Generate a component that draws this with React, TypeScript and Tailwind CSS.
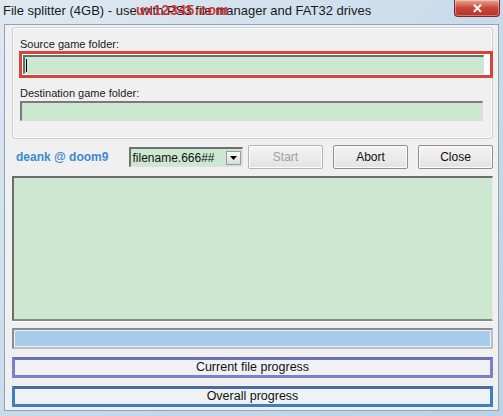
import React from "react";

const ui = { fontFamily: '"Liberation Sans", Arial, sans-serif' };

function SysButton({ label, disabled }: { label: string; disabled?: boolean }) {
  return (
    <div
      className={`flex h-[24px] w-[75px] items-center justify-center rounded-[2px] border border-[#8f8f8f] bg-gradient-to-b from-[#f4f4f4] to-[#e2e2e2] text-[12px] shadow-[inset_0_0_0_1px_#fcfcfc] ${
        disabled ? "border-[#b5b5b5] text-[#a0a0a0]" : "text-[#111]"
      }`}
    >
      {label}
    </div>
  );
}

export default function App() {
  return (
    <div
      className="flex h-[416px] w-[503px] flex-col overflow-hidden bg-gradient-to-br from-[#dfe9f2] via-[#c9dbeb] to-[#bcd2e6]"
      style={ui}
    >
      {/* caption bar */}
      <div className="relative flex h-[24px] shrink-0 items-start justify-between">
        <div className="relative pl-[3px] pt-[3px] text-[13px] leading-[16px] text-[#1a1a1a]">
          File splitter (4GB) - use with PS3 file manager and FAT32 drives
          <span className="absolute left-[136px] top-[2px] text-[14px] font-bold tracking-[0.5px] text-[#d81e1e]/90">
            ux12345.com
          </span>
        </div>
        <div className="mr-[3px] flex h-[17px] w-[46px] items-center justify-center rounded-b-[4px] border border-t-0 border-[#7a2a24] bg-gradient-to-b from-[#e8a393] via-[#c9463a] to-[#b83226] text-[13px] font-bold leading-none text-white shadow-[inset_0_0_0_1px_rgba(255,255,255,0.35)]">
          ✕
        </div>
      </div>

      {/* client area */}
      <div className="mx-[4px] flex flex-1 flex-col border border-[#8ea4bb] bg-[#f0f0f0] pl-[7px] pr-[5px]">
        {/* folder group */}
        <div className="mt-[2px] flex h-[112px] w-[481px] flex-col rounded-[3px] border border-[#c7ced4] px-[7px] pt-[9px] shadow-[inset_0_0_0_1px_#fbfbfb]">
          <div className="text-[11px] leading-[14px] text-[#1a1a1a]">Source game folder:</div>
          <div className="-ml-[1px] flex h-[27px] w-[474px] items-center border-[3px] border-[#d4453c] bg-white pl-[1px]">
            <div className="flex h-[19px] w-[461px] items-center border-l-[2px] border-t-[2px] border-[#6a6a6a] border-b border-r border-b-[#dcdcdc] border-r-[#dcdcdc] bg-[#cde8d1] pl-[1px]">
              <div className="h-[13px] w-[1px] bg-black" />
            </div>
          </div>
          <div className="mt-[8px] text-[11px] leading-[14px] text-[#1a1a1a]">Destination game folder:</div>
          <div className="mt-[1px] h-[20px] w-[463px] border-l-[2px] border-t-[2px] border-[#7a7a7a] border-b border-r border-b-[#dcdcdc] border-r-[#dcdcdc] bg-[#cde8d1]" />
        </div>

        {/* controls row */}
        <div className="mt-[6px] flex h-[24px] w-[481px] items-center">
          <div className="w-[118px] pl-[4px] text-[12px] font-bold text-[#3b8ad0]">deank @ doom9</div>
          <div className="flex h-[20px] w-[114px] items-center justify-between border-l-[2px] border-t-[2px] border-[#6f6f6f] border-b border-r border-b-[#e0e0e0] border-r-[#e0e0e0] bg-[#cde8d1] pr-[1px]">
            <span className="pl-[1px] text-[12px] leading-none text-[#111]">filename.666##</span>
            <div className="flex h-[14px] w-[15px] items-center justify-center border border-[#9a9a9a] bg-gradient-to-b from-[#f7f7f7] to-[#dcdcdc]">
              <svg width="7" height="4" viewBox="0 0 7 4">
                <path d="M0 0h7L3.5 4z" fill="#000" />
              </svg>
            </div>
          </div>
          <div className="ml-[5px] flex gap-[10px]">
            <SysButton label="Start" disabled />
            <SysButton label="Abort" />
            <SysButton label="Close" />
          </div>
        </div>

        {/* log */}
        <div className="mt-[7px] h-[145px] w-[481px] border-l-[2px] border-t-[2px] border-[#6c6c6c] border-b-[2px] border-r border-b-[#8a8a8a] border-r-[#e8e8e8] bg-[#cde8d1]" />
        <div className="h-[1px] w-[481px] bg-white" />

        {/* status bar */}
        <div className="mt-[6px] h-[21px] w-[481px] border-[2px] border-[#8c8c8c] border-b-[#bdbdbd] border-r-[#bdbdbd] bg-[#a6cdec] shadow-[inset_0_0_0_1px_#e9f2f9]" />

        {/* progress */}
        <div className="mt-[8px] flex h-[21px] w-[481px] items-center justify-center border-[3px] border-[#7c80c8] border-t-[#6b6fb3] bg-[#f1f1f5] text-[12.5px] text-[#111]">
          Current file progress
        </div>
        <div className="mt-[8px] flex h-[21px] w-[481px] items-center justify-center border-[3px] border-[#3a80c2] border-t-[#4b6c9e] bg-[#eff2f5] text-[12.5px] text-[#111]">
          Overall progress
        </div>
      </div>
      <div className="h-[5px] shrink-0" />
    </div>
  );
}
